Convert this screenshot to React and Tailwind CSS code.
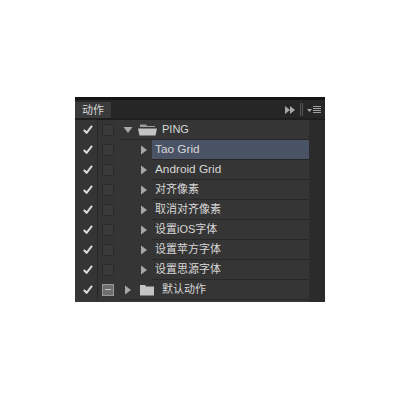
import React from "react";

const font = { fontFamily: '"Liberation Sans", "Noto Sans CJK SC", sans-serif' };

const Check = () => (
  <svg width="10" height="9" viewBox="0 0 10 9">
    <path d="M0.8 5 L3.6 7.8 L9 0.8" fill="none" stroke="#dcdcdc" strokeWidth="2" />
  </svg>
);

const Arrow = ({ open }) => (
  <svg width="10" height="10" viewBox="0 0 10 10">
    {open ? <path d="M0.5 2 H9.5 L5 8 Z" fill="#a8a8a8" /> : <path d="M2 0.5 V9.5 L8 5 Z" fill="#a8a8a8" />}
  </svg>
);

const Folder = ({ open }) => (
  <svg width="20" height="12" viewBox="0 0 20 12">
    {open ? (
      <>
        <path d="M2 3 V0.5 H8 L9 2 H17 V3 Z" fill="#9c9c9c" />
        <path d="M0 4.5 H19 L17.5 11.5 H1.5 Z" fill="#c4c4c4" />
      </>
    ) : (
      <path d="M2 1 H7 L8 2.5 H16 V11.5 H2 Z" fill="#c4c4c4" />
    )}
  </svg>
);

const rows = [
  { label: "PING", folder: "open", size: "text-[11px]" },
  { label: "Tao Grid", selected: true, size: "text-[11.8px]" },
  { label: "Android Grid", size: "text-[11.8px]" },
  { label: "对齐像素", size: "text-[11px]" },
  { label: "取消对齐像素", size: "text-[11px]" },
  { label: "设置iOS字体", size: "text-[11px]" },
  { label: "设置苹方字体", size: "text-[11px]" },
  { label: "设置思源字体", size: "text-[11px]" },
  { label: "默认动作", folder: "closed", size: "text-[11px]" },
];

const Row = ({ row }) => (
  <div className="flex h-5 items-stretch">
    <div className="flex w-[23px] shrink-0 items-center justify-center border-r border-[#272727] pb-[2px] pl-[3px]">
      <Check />
    </div>
    <div className="flex w-[22px] shrink-0 items-center pb-[1px] pl-[4px]">
      {row.folder === "closed" ? (
        <div className="flex h-[12px] w-[12px] items-center justify-center border border-[#999999] bg-[#6e6e6e]">
          <div className="h-[1px] w-[6px] bg-[#c8c8c8]" />
        </div>
      ) : (
        <div className="h-[12px] w-[12px] border border-[#2a2a2a] bg-[#3a3a3a]" />
      )}
    </div>
    {row.folder ? (
      <div className="flex flex-1 items-center border-b border-[#272727]">
        <div className="flex w-[15px] shrink-0 items-center justify-center">
          <Arrow open={row.folder === "open"} />
        </div>
        <div className="ml-[3px] flex w-[24px] shrink-0 items-center">
          <Folder open={row.folder === "open"} />
        </div>
        <span className={`${row.size} text-[#d8d8d8]`}>{row.label}</span>
      </div>
    ) : (
      <>
        <div className="flex w-[32px] shrink-0 items-center justify-end pr-[3px]">
          <Arrow />
        </div>
        <div className={`flex flex-1 items-center border-b border-[#272727] pl-[3px] ${row.selected ? "bg-[#4a5266]" : ""}`}>
          <span className={`${row.size} text-[#d8d8d8]`}>{row.label}</span>
        </div>
      </>
    )}
  </div>
);

export default function App() {
  return (
    <div className="flex h-[400px] w-[400px] flex-col bg-white pl-[75px] pt-[97px]" style={font}>
      <div className="flex h-[205px] w-[250px] flex-col bg-[#353535]">
        <div className="flex h-[23px] shrink-0 items-end border-t-[3px] border-b-2 border-t-[#141414] border-b-[#1e1e1e] bg-[#262626]">
          <div className="flex h-[16px] w-[36px] items-center justify-center bg-[#3a3a3a] text-[11px] text-[#d8d8d8]">动作</div>
          <div className="ml-auto flex h-[16px] items-center pr-[3px]">
            <svg width="38" height="14" viewBox="0 0 38 14">
              <path d="M1 3 V11 L6 7 Z M6 3 V11 L11 7 Z" fill="#a8a8a8" />
              <path d="M16.5 0 V13 M18.5 0 V13" stroke="#555555" strokeWidth="1" />
              <path d="M23 6 H28 L25.5 9 Z" fill="#a8a8a8" />
              <path d="M29 3.5 H37 M29 5.5 H37 M29 7.5 H37 M29 9.5 H37" stroke="#a0a0a0" strokeWidth="1" />
            </svg>
          </div>
        </div>
        <div className="flex flex-1">
          <div className="flex-1">
            {rows.map((row) => (
              <Row key={row.label} row={row} />
            ))}
          </div>
          <div className="w-[16px] shrink-0 bg-[#2b2b2b]" />
        </div>
      </div>
    </div>
  );
}
